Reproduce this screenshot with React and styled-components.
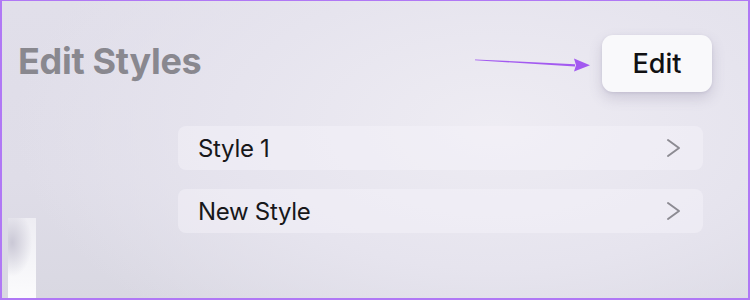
import React from "react";
import styled, { createGlobalStyle } from "styled-components";

const Global = createGlobalStyle`
  html, body { margin: 0; padding: 0; background: #fff; }
  body { font-family: Inter, "Noto Sans", sans-serif; }
`;

const Screen = styled.div`
  position: relative;
  width: 750px;
  height: 300px;
  box-sizing: border-box;
  border: 2px solid #b078f5;
  border-top-width: 1px;
  overflow: hidden;
  display: flex;
  flex-direction: column;
  background:
    radial-gradient(ellipse 480px 260px at 66% 42%, #eeecf3 0%, #e6e4ee 55%, rgba(226,224,234,0) 100%),
    linear-gradient(180deg, #e1dfea 0%, #dfdde8 60%, #d9d8e2 100%);
`;

const Header = styled.div`
  display: flex;
  align-items: flex-start;
  padding: 34px 36px 0 16px;
`;

const Title = styled.h1`
  margin: 6px 0 0;
  font-family: Inter, sans-serif;
  font-size: 36px;
  font-weight: 700;
  letter-spacing: -0.3px;
  line-height: 40px;
  color: #89888f;
`;

const Spacer = styled.div`
  flex: 1;
`;

const Pointer = styled.svg`
  margin: 22px 11px 0 0;
  flex: none;
`;

const EditButton = styled.button`
  width: 110px;
  height: 57px;
  border: none;
  border-radius: 11px;
  background: #f9f9fb;
  box-shadow: 0 6px 14px rgba(90, 80, 120, 0.2), 0 1px 3px rgba(90, 80, 120, 0.12);
  font-family: Inter, sans-serif;
  font-size: 27px;
  font-weight: 500;
  color: #111113;
  padding: 0;
`;

const List = styled.div`
  display: flex;
  flex-direction: column;
  gap: 19px;
  width: 525px;
  margin: 34px 0 0 176px;
`;

const Row = styled.div`
  display: flex;
  align-items: center;
  justify-content: space-between;
  height: 44px;
  box-sizing: border-box;
  padding: 0 22px 0 20px;
  border-radius: 8px;
  background: rgba(246, 245, 250, 0.45);
  font-family: Inter, sans-serif;
  font-size: 24px;
  font-weight: 400;
  letter-spacing: -0.3px;
  color: #17171a;
`;

const Glare = styled.div`
  position: absolute;
  left: 6px;
  top: 217px;
  width: 28px;
  height: 82px;
  background:
    radial-gradient(ellipse 20px 34px at 15% 30%, rgba(200,198,212,0.95), rgba(255,255,255,0) 100%),
    linear-gradient(180deg, #eeedf3 0%, #f6f6f9 60%, #fcfcfd 100%);
`;

const Chevron = () => (
  <svg width="15" height="20" viewBox="0 0 15 20" aria-hidden="true">
    <path d="M2 2 L13 10 L2 18" fill="none" stroke="#8c8b92" strokeWidth="2" strokeLinecap="round" strokeLinejoin="round" />
  </svg>
);

export default function App() {
  return (
    <>
      <Global />
      <Screen>
        <Header>
          <Title>Edit Styles</Title>
          <Spacer />
          <Pointer width="116" height="16" viewBox="0 0 116 16">
            <path d="M0 2.4 L100 7.2 L100 9.6 L0 3.2 Z" fill="#a35af0" />
            <path d="M99 1.5 L115 8.2 L99 14.5 L101 8.2 Z" fill="#a35af0" />
          </Pointer>
          <EditButton>Edit</EditButton>
        </Header>
        <List>
          <Row>
            <span>Style 1</span>
            <Chevron />
          </Row>
          <Row>
            <span>New Style</span>
            <Chevron />
          </Row>
        </List>
        <Glare />
      </Screen>
    </>
  );
}
